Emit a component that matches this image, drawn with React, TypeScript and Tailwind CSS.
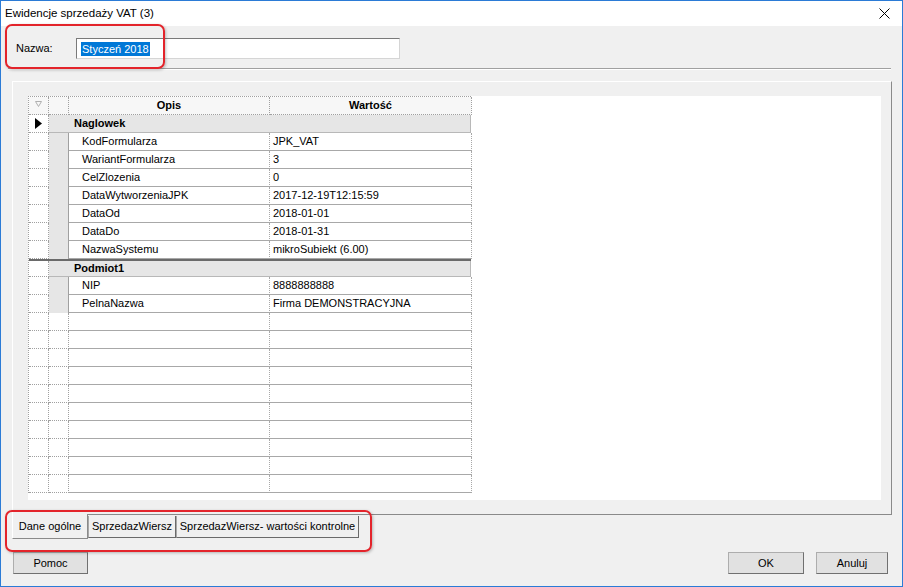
type Row =
  | { t: "group"; label: string; arrow?: boolean; thick?: boolean }
  | { t: "item"; opis: string; val: string }
  | { t: "empty" };

const rows: Row[] = [
  { t: "group", label: "Naglowek", arrow: true },
  { t: "item", opis: "KodFormularza", val: "JPK_VAT" },
  { t: "item", opis: "WariantFormularza", val: "3" },
  { t: "item", opis: "CelZlozenia", val: "0" },
  { t: "item", opis: "DataWytworzeniaJPK", val: "2017-12-19T12:15:59" },
  { t: "item", opis: "DataOd", val: "2018-01-01" },
  { t: "item", opis: "DataDo", val: "2018-01-31" },
  { t: "item", opis: "NazwaSystemu", val: "mikroSubiekt (6.00)" },
  { t: "group", label: "Podmiot1", thick: true },
  { t: "item", opis: "NIP", val: "8888888888" },
  { t: "item", opis: "PelnaNazwa", val: "Firma DEMONSTRACYJNA" },
  ...Array.from({ length: 10 }, () => ({ t: "empty" as const })),
];

const dot = "border-[#a0a0a0] [border-style:dotted]";

function GridRow({ row }: { row: Row }) {
  if (row.t === "group") {
    return (
      <div className={`flex h-[18px] ${row.thick ? "border-t-2 border-[#6a6a6a]" : ""}`}>
        <div className={`w-[20px] shrink-0 bg-white border-r border-b ${dot} flex items-center justify-center`}>
          {row.arrow && (
            <svg width="7" height="11" viewBox="0 0 7 11">
              <path d="M0 0 L7 5.5 L0 11 Z" fill="#000" />
            </svg>
          )}
        </div>
        <div className="flex-1 bg-[#e6e6e6] border-r border-b border-[#b8b8b8] pl-[25px] flex items-center font-bold text-[11px] text-black">
          {row.label}
        </div>
      </div>
    );
  }
  const item = row.t === "item";
  return (
    <div className="flex h-[18px]">
      <div className={`w-[20px] shrink-0 bg-white border-r border-b ${dot}`} />
      <div
        className={`w-[20px] shrink-0 border-r ${
          item ? "bg-[#e6e6e6] border-[#a0a0a0]" : `bg-white border-b ${dot}`
        }`}
      />
      <div className="w-[201px] shrink-0 bg-white border-r border-b border-[#a8a8a8] [border-right-style:dotted] pl-[13px] flex items-center text-[11px] text-black">
        {item ? row.opis : ""}
      </div>
      <div className="w-[202px] shrink-0 bg-white border-r border-b border-[#a8a8a8] [border-right-style:dotted] pl-[3px] flex items-center text-[11px] text-black">
        {item ? row.val : ""}
      </div>
    </div>
  );
}

function Btn({ label, w, className = "" }: { label: string; w: string; className?: string }) {
  return (
    <div
      className={`${w} h-[22px] bg-[#e1e1e1] border border-[#adadad] border-r-[#707070] border-b-[#707070] flex items-center justify-center text-[11px] text-black ${className}`}
    >
      {label}
    </div>
  );
}

export default function App() {
  return (
    <div
      className="relative w-[903px] h-[587px] border border-[#2b7bd6] bg-[#f0f0f0] flex flex-col overflow-hidden"
      style={{ fontFamily: '"Liberation Sans", Arial, sans-serif' }}
    >
      {/* Title bar */}
      <div className="h-[25px] bg-white flex items-center justify-between pl-[4px] pr-[12px] shrink-0">
        <span className="text-[11.5px] text-black">Ewidencje sprzedaży VAT (3)</span>
        <svg width="11" height="11" viewBox="0 0 11 11">
          <path d="M0.5 0.5 L10.5 10.5 M10.5 0.5 L0.5 10.5" stroke="#000" strokeWidth="1" />
        </svg>
      </div>

      {/* Nazwa */}
      <div className="flex items-center mt-[12px] h-[21px]">
        <span className="ml-[15px] w-[60px] text-[11px] text-black">Nazwa:</span>
        <div className="w-[324px] h-[21px] bg-white border border-[#d5d5d5] border-t-[#7a7a7a] border-l-[#7a7a7a] flex items-center pl-[4px]">
          <span className="bg-[#0078d7] text-white text-[11px] px-[1px] leading-[14px]">Styczeń 2018</span>
        </div>
      </div>

      {/* Separator */}
      <div className="mt-[9px] ml-[7px] w-[883px] border-t border-[#a0a0a0] border-b border-b-white" />

      {/* Tab panel */}
      <div className="mt-[11px] ml-[11px] w-[880px] h-[434px] border border-white border-r-[#8a8a8a] border-b-[#8a8a8a] pl-[15px] pr-[10px] pt-[14px] pb-[14px] flex">
        <div className="flex-1 bg-white">
          <div className={`w-[443px] border-l border-t ${dot}`}>
            <div className="flex h-[18px] bg-[#f7f7f7]">
              <div className={`w-[20px] shrink-0 border-r border-b ${dot} flex items-start justify-center pt-[4px]`}>
                <svg width="7" height="6" viewBox="0 0 7 6">
                  <path d="M0.5 0.5 L6.5 0.5 L3.5 5.5 Z" fill="none" stroke="#b0b0b0" strokeWidth="1" />
                </svg>
              </div>
              <div className={`w-[20px] shrink-0 border-r border-b ${dot}`} />
              <div className={`w-[201px] shrink-0 border-r border-b ${dot} flex items-center justify-center font-bold text-[11px] text-black`}>
                Opis
              </div>
              <div className={`w-[202px] shrink-0 border-r border-b ${dot} flex items-center justify-center font-bold text-[11px] text-black`}>
                Wartość
              </div>
            </div>
            {rows.map((r, i) => (
              <GridRow key={i} row={r} />
            ))}
          </div>
        </div>
      </div>

      {/* Tabs */}
      <div className="flex ml-[11px] h-[25px] items-start">
        <div className="relative -mt-[1px] w-[76px] h-[25px] bg-[#f0f0f0] border-l border-white border-r border-r-[#8a8a8a] border-b border-b-[#8a8a8a] flex items-center justify-center text-[11px] text-black">
          Dane ogólne
        </div>
        <div className="mt-[1px] w-[88px] h-[22px] border border-[#a8a8a8] border-r-[#6a6a6a] border-b-[#6a6a6a] border-t-0 flex items-center justify-center text-[11px] text-black">
          SprzedazWiersz
        </div>
        <div className="mt-[1px] w-[183px] h-[22px] border border-[#a8a8a8] border-r-[#6a6a6a] border-b-[#6a6a6a] border-t-0 flex items-center justify-center text-[11px] text-black">
          SprzedazWiersz- wartości kontrolne
        </div>
      </div>

      {/* Buttons */}
      <div className="flex mt-[12px] items-start">
        <Btn label="Pomoc" w="w-[75px]" className="ml-[12px]" />
        <Btn label="OK" w="w-[76px]" className="ml-auto" />
        <Btn label="Anuluj" w="w-[72px]" className="ml-[12px] mr-[14px]" />
      </div>

      {/* Red highlight frames */}
      <div className="absolute left-[4px] top-[23px] w-[160px] h-[45px] border-2 border-[#e3242b] rounded-[7px] shadow-[1px_1px_3px_rgba(0,0,0,0.25)]" />
      <div className="absolute left-[4px] top-[509px] w-[367px] h-[42px] border-2 border-[#e3242b] rounded-[7px] shadow-[1px_1px_3px_rgba(0,0,0,0.25)]" />
    </div>
  );
}
